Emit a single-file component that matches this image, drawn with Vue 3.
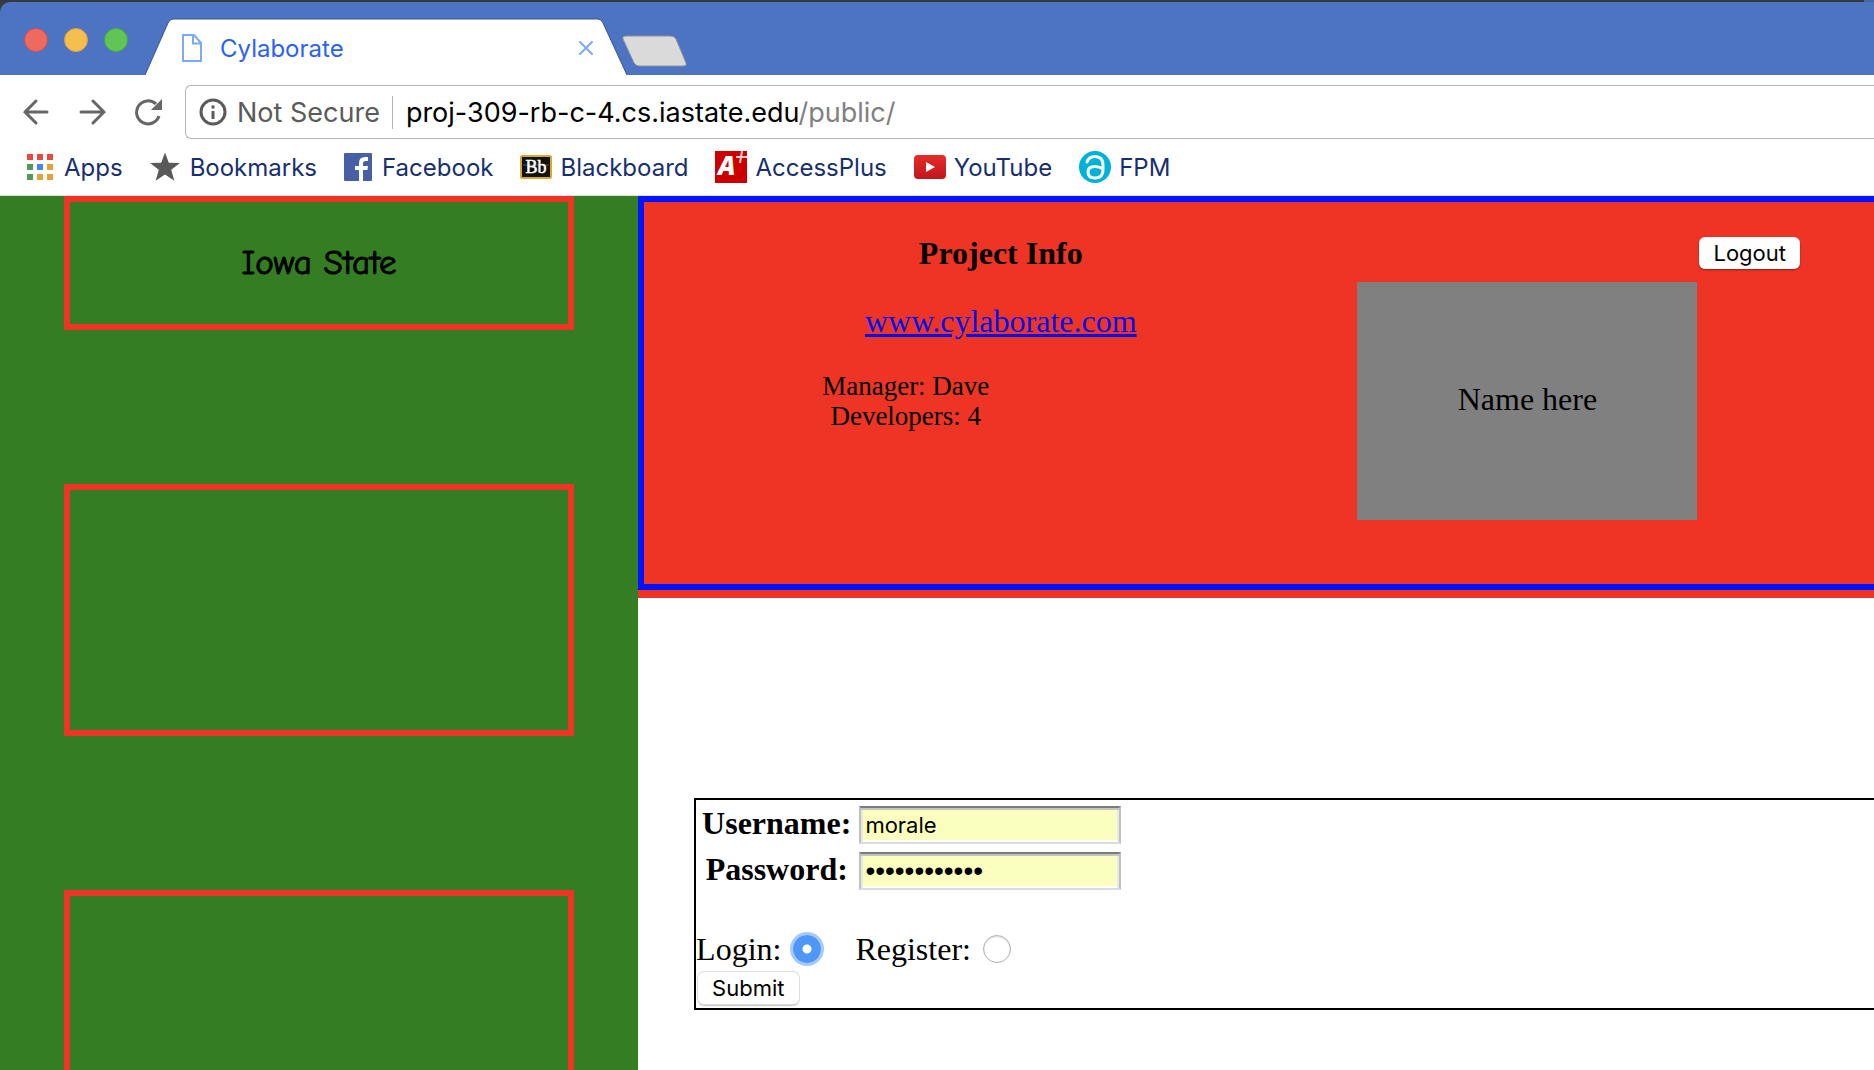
<script setup>
import { ref } from 'vue'

const username = ref('morale')
const password = ref('cyclones1234')
const mode = ref('login')
</script>

<template>
  <div class="window">
    <div class="desktop-edge"></div>
    <header class="tab-strip">
      <div class="lights">
        <button class="light close" aria-label="Close window"></button>
        <button class="light minimize" aria-label="Minimize window"></button>
        <button class="light zoom" aria-label="Zoom window"></button>
      </div>
      <div class="tab">
        <svg class="tab-shape" width="484" height="57" viewBox="0 0 484 57" aria-hidden="true">
          <path d="M1 57 L24 5 Q26 1 29 1 H454 Q457 1 459 5 L483 57 Z" fill="#fff" />
          <path d="M1 57 L24 5 Q26 1 29 1 H454 Q457 1 459 5 L483 57" fill="none" stroke="#34548f" />
        </svg>
        <div class="tab-content">
          <svg width="20" height="28" viewBox="0 0 20 28" aria-hidden="true">
            <path d="M1 1 H12 L19 9 V27 H1 Z M11 1 V9.500 H19" fill="none" stroke="#7baaf7" stroke-width="2" />
          </svg>
          <span class="tab-title">Cylaborate</span>
          <button class="plain" aria-label="Close tab">
            <svg width="14" height="14" viewBox="0 0 14 14">
              <path d="M1 1 L13 13 M13 1 L1 13" stroke="#7baaf7" stroke-width="2" stroke-linecap="round" />
            </svg>
          </button>
        </div>
      </div>
      <button class="plain new-tab" aria-label="New tab">
        <svg width="66" height="32" viewBox="0 0 66 32">
          <path d="M4 1 H49 Q52 1 54 4 L64 28 Q65 31 62 31 H17 Q14 31 12 28 L1 4 Q0 1 4 1 Z" fill="#dadada" stroke="#8d9099" />
        </svg>
      </button>
    </header>

    <div class="toolbar">
      <nav class="history" aria-label="History">
        <button class="plain" aria-label="Back">
          <svg width="28" height="28" viewBox="0 0 28 28">
            <path d="M25 14 H3 M14 3 L3 14 L14 25" fill="none" stroke="#666" stroke-width="3" stroke-linecap="round" />
          </svg>
        </button>
        <button class="plain" aria-label="Forward">
          <svg width="28" height="28" viewBox="0 0 28 28">
            <path d="M3 14 H26 M15 3 L26 14 L15 25" fill="none" stroke="#666" stroke-width="3" stroke-linecap="round" />
          </svg>
        </button>
        <button class="plain" aria-label="Reload">
          <svg width="28" height="28" viewBox="0 0 28 28">
            <path d="M25 18 A11.500 11.500 0 1 1 22 6" fill="none" stroke="#666" stroke-width="3" />
            <path d="M28 1 V12 H17 Z" fill="#666" />
          </svg>
        </button>
      </nav>
      <div class="address">
        <svg width="28" height="28" viewBox="0 0 28 28" aria-hidden="true">
          <circle cx="14" cy="14" r="12" fill="none" stroke="#5a5a5a" stroke-width="3" />
          <path d="M14 7.500 V10.500 M14 13 V21" stroke="#5a5a5a" stroke-width="3" />
        </svg>
        <span class="security">Not Secure</span>
        <div class="url" role="textbox" aria-label="Address">proj-309-rb-c-4.cs.iastate.edu<span class="path">/public/</span></div>
      </div>
    </div>

    <nav class="bookmarks" aria-label="Bookmarks">
      <a href="#" class="bookmark">
        <svg width="27" height="26" viewBox="0 0 27 26" aria-hidden="true">
          <path d="M0 0h6v6h-6z M10 0h6v6h-6z M20 0h6v6h-6z" fill="#e8493e" />
          <path d="M0 10h6v6h-6z M0 20h6v6h-6z" fill="#4f9a5b" />
          <path d="M10 10h6v6h-6z" fill="#4189f0" />
          <path d="M20 10h6v6h-6z M10 20h6v6h-6z M20 20h6v6h-6z" fill="#e5a336" />
        </svg>
        Apps
      </a>
      <a href="#" class="bookmark">
        <svg width="30" height="30" viewBox="0 0 30 30" aria-hidden="true">
          <path d="M15 0.500 L18.800 10.700 L30 11 L21.200 17.700 L24.300 28.700 L15 22.400 L5.700 28.700 L8.800 17.700 L0 11 L11.200 10.700 Z" fill="#595959" />
        </svg>
        Bookmarks
      </a>
      <a href="#" class="bookmark">
        <svg width="28" height="28" viewBox="0 0 28 28" aria-hidden="true">
          <rect width="28" height="28" rx="1" fill="#4760a5" />
          <path d="M15 28 V17 H11 V13 H15 V10 Q15 4 21 4 H24 V8 H21.500 Q19 8 19 10.500 V13 H24 L23.400 17 H19 V28 Z" fill="#fff" />
        </svg>
        Facebook
      </a>
      <a href="#" class="bookmark favicon">
        <svg width="32" height="24" viewBox="0 0 32 24" aria-hidden="true">
          <rect x="1" y="1" width="30" height="22" rx="1" fill="#111" stroke="#d8aa2c" stroke-width="2" />
          <path d="M3 10 H29" stroke="#555" />
          <text x="16" y="18" text-anchor="middle" font-family="Liberation Serif, serif" font-size="18" fill="#fff" stroke="#fff" stroke-width="0.500">Bb</text>
        </svg>
        Blackboard
      </a>
      <a href="#" class="bookmark favicon">
        <svg width="32" height="32" viewBox="0 0 32 32" aria-hidden="true">
          <rect width="32" height="32" fill="#c00" />
          <text x="3" y="24" font-family="Open Sans, sans-serif" font-size="26" font-weight="800" font-style="italic" fill="#fff">A</text>
          <path d="M21 6 H32 M27 0 L25 12" stroke="#f6caca" stroke-width="2" />
        </svg>
        AccessPlus
      </a>
      <a href="#" class="bookmark favicon">
        <svg width="32" height="24" viewBox="0 0 32 24" aria-hidden="true">
          <defs>
            <linearGradient id="yt" x1="0" y1="0" x2="0" y2="1">
              <stop offset="0" stop-color="#e52d27" />
              <stop offset="1" stop-color="#bf171d" />
            </linearGradient>
          </defs>
          <rect width="32" height="24" rx="4" fill="url(#yt)" />
          <path d="M12 7 L21 12 L12 17 Z" fill="#fff" />
        </svg>
        YouTube
      </a>
      <a href="#" class="bookmark favicon">
        <svg width="32" height="32" viewBox="0 0 32 32" aria-hidden="true">
          <circle cx="16" cy="16" r="16" fill="#00b1d8" />
          <path d="M8 11 Q10 5.500 16 5.500 Q24 5.500 24 14 V19 Q24 27 16 27 Q9 27 9 21 Q9 15.500 16 15.500 Q20 15.500 24 18" fill="none" stroke="#fff" stroke-width="3" stroke-linecap="round" />
        </svg>
        FPM
      </a>
    </nav>

    <div class="page">
      <aside class="sidebar">
        <section class="panel short">Iowa State</section>
        <section class="panel"></section>
        <section class="panel"></section>
      </aside>
      <main class="content">
        <div class="banner">
          <div class="banner-frame">
            <section class="info">
              <h1>Project Info</h1>
              <a href="#" class="site">www.cylaborate.com</a>
              <p>Manager: Dave<br>Developers: 4</p>
            </section>
            <div class="name-card">Name here</div>
            <button class="btn logout">Logout</button>
          </div>
        </div>
        <form class="login" @submit.prevent>
          <table>
            <tbody>
              <tr>
                <th><label for="username">Username:</label></th>
                <td><input id="username" v-model="username" class="field" type="text"></td>
              </tr>
              <tr>
                <th><label for="password">Password:</label></th>
                <td><input id="password" v-model="password" class="field secret" type="password"></td>
              </tr>
            </tbody>
          </table>
          <div class="modes">
            <label class="mode">Login: <input v-model="mode" type="radio" name="mode" value="login"></label>
            <label class="mode">Register: <input v-model="mode" type="radio" name="mode" value="register"></label>
          </div>
          <button class="btn submit" type="submit">Submit</button>
        </form>
      </main>
    </div>
  </div>
</template>

<style>
body {
  overflow: hidden;
}
</style>

<style scoped>
* {
  box-sizing: border-box;
}

.window {
  display: flex;
  flex-direction: column;
  height: 100vh;
  overflow: hidden;
  background: #fff;
  font-family: Inter, sans-serif;
}

svg {
  display: block;
  flex: none;
}

.plain {
  padding: 0;
  border: 0;
  background: none;
}

.desktop-edge {
  flex: none;
  height: 2px;
  background: linear-gradient(90deg, #36393d 84%, #4a6a9c 85%);
}

.tab-strip {
  display: flex;
  flex: none;
  height: 73px;
  border-top-left-radius: 10px;
  background: #4c74c3;
  box-shadow: -10px -10px 0 #36393d;
}

.lights {
  display: flex;
  gap: 16px;
  width: 144px;
  padding: 26px 0 0 24px;
}

.light {
  width: 24px;
  height: 24px;
  padding: 0;
  border: 1px solid;
  border-radius: 50%;
}

.close {
  border-color: #d4504a;
  background: #ee6a5f;
}

.minimize {
  border-color: #d9a03c;
  background: #f5bf4f;
}

.zoom {
  border-color: #4aa93e;
  background: #61c555;
}

.tab {
  display: grid;
  align-self: flex-end;
}

.tab-shape,
.tab-content {
  grid-area: 1 / 1;
}

.tab-content {
  z-index: 1;
  display: flex;
  align-items: center;
  padding: 3px 35px 0 38px;
}

.tab-title {
  flex: 1;
  padding-left: 18px;
  color: #2962f4;
  font-size: 24px;
}

.new-tab {
  align-self: flex-start;
  margin: 33px 0 0 -6px;
}

.toolbar {
  display: flex;
  flex: none;
  align-items: center;
  padding: 10px 0 0 22px;
}

.history {
  display: flex;
  gap: 28px;
  width: 163px;
}

.address {
  display: flex;
  flex: 1;
  align-items: center;
  height: 54px;
  padding-left: 13px;
  border: 1px solid #b3b3b3;
  border-right: 0;
  border-radius: 6px 0 0 6px;
  font-size: 27px;
}

.security {
  margin-left: 10px;
  padding-right: 12px;
  border-right: 1px solid #b3b3b3;
  color: #5a5a5a;
}

.url {
  margin-left: 13px;
}

.path {
  color: #808080;
}

.bookmarks {
  display: flex;
  flex: none;
  gap: 27px;
  align-items: center;
  height: 57px;
  padding-left: 27px;
  border-bottom: 1px solid #e0e0e0;
}

.bookmark {
  display: flex;
  gap: 10px;
  align-items: center;
  color: #172f6e;
  font-size: 24px;
  text-decoration: none;
}

.favicon {
  gap: 8px;
}

.page {
  display: flex;
  flex: 1;
  min-height: 0;
  overflow: hidden;
  font-family: "Liberation Serif", serif;
  font-size: 32px;
  line-height: 36px;
}

.sidebar {
  display: flex;
  flex: 0 0 34.05%;
  flex-direction: column;
  gap: 154px;
  align-items: center;
  background: #347d23;
}

.panel {
  flex: none;
  width: 80%;
  height: 252px;
  border: 6px solid #ee3424;
}

.short {
  display: flex;
  align-items: center;
  justify-content: center;
  height: 134px;
  font-family: Chalkboard, "Comic Sans MS", "Comic Neue", cursive;
  font-size: 35px;
  -webkit-text-stroke: 1px #000;
}

.content {
  flex: 1;
  min-width: 0;
}

.banner {
  padding-bottom: 8px;
  background: #ee3424;
}

.banner-frame {
  display: flex;
  align-items: flex-start;
  height: 394px;
  border: 6px solid #0013ff;
  border-right: 0;
}

.info {
  flex: 0 0 58%;
  padding-top: 33px;
  text-align: center;
}

h1 {
  margin: 0 0 32px;
  font-size: 32px;
}

.site {
  color: #0013ee;
}

.info p {
  margin: 32px 190px 0 0;
  font-size: 27px;
  line-height: 30px;
}

.name-card {
  display: flex;
  flex: none;
  align-items: center;
  justify-content: center;
  width: 340px;
  height: 238px;
  margin-top: 80px;
  padding-bottom: 4px;
  background: #808080;
}

.btn {
  height: 32px;
  padding: 0 14px;
  border: 0;
  border-radius: 6px;
  background: #fff;
  color: #000;
  font-family: Inter, sans-serif;
  font-size: 22px;
  line-height: 32px;
}

.logout {
  margin: 35px 0 0 2px;
  box-shadow: 0 1px 2px rgba(0, 0, 0, 0.4);
}

.login {
  margin: 200px 0 0 56px;
  border: 2px solid #000;
  border-right: 0;
}

table {
  border-spacing: 4px;
}

th,
td {
  padding: 2px;
}

th {
  padding-bottom: 6px;
  line-height: 34px;
}

.field {
  display: block;
  width: 262px;
  height: 38px;
  padding: 0 4px;
  border: 2px solid;
  border-color: #7b7b7b #c0c0c0 #dcdcdc;
  background: #faffbd;
  box-shadow:
    inset 0 2px #c4c4c4,
    inset 2px 0 #e8e8e8,
    inset -2px 0 #e8e8e8,
    inset 0 -2px #fff;
  font-family: Inter, sans-serif;
  font-size: 22px;
}

.secret {
  font-family: "Liberation Sans", sans-serif;
  font-size: 28px;
}

.modes {
  display: flex;
  gap: 34px;
  margin-top: 35px;
}

.mode {
  display: flex;
  gap: 12px;
  align-items: center;
}

.mode input {
  width: 28px;
  height: 28px;
  margin: 0;
  border: 1px solid #b0b0b0;
  border-radius: 50%;
  appearance: none;
  background: #fff;
  box-shadow: inset 0 1px 2px rgba(0, 0, 0, 0.15);
}

.mode input:checked {
  border: 0;
  background: radial-gradient(circle, #fff 4px, #4f97f7 5px);
  box-shadow: 0 0 0 3px #a5c9fa;
}

.submit {
  display: block;
  margin: 5px 0 4px 2px;
  box-shadow: 0 0 0 1px #ddd, 0 2px 1px #c4c4c4;
}
</style>
